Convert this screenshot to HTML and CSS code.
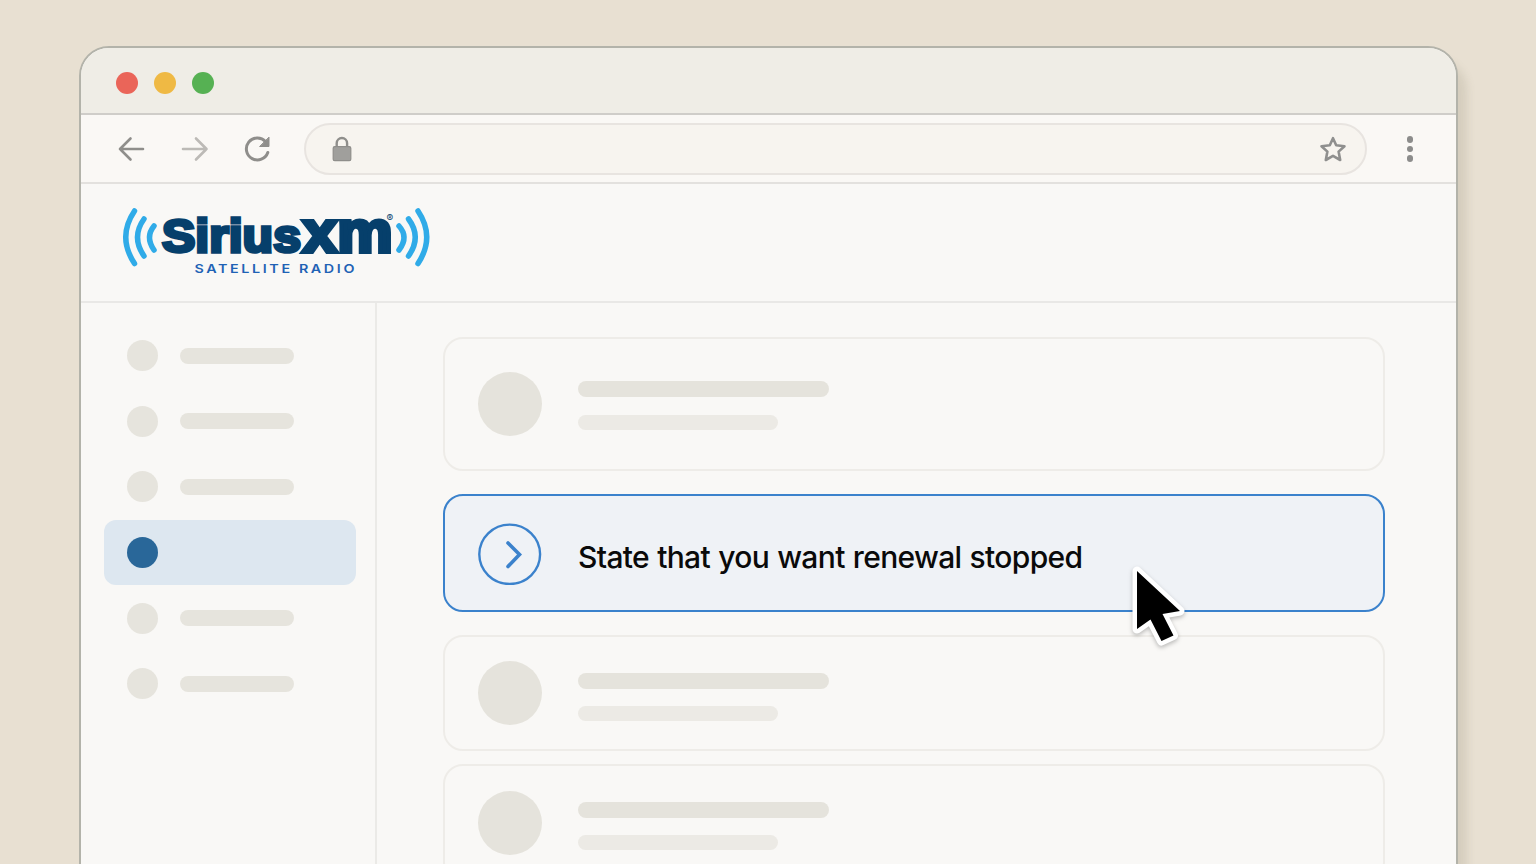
FILE: index.html
```html
<!DOCTYPE html>
<html lang="en">
<head>
  <meta charset="UTF-8">
  <meta name="viewport" content="width=device-width, initial-scale=1.0">
  <title>SiriusXM</title>
  <link rel="stylesheet" href="styles.css">
</head>
<body>

  <div class="browser">
    <!-- Window buttons -->
    <div class="title-bar">
      <span class="dot red"></span>
      <span class="dot yellow"></span>
      <span class="dot green"></span>
    </div>

    <!-- Toolbar -->
    <div class="toolbar">
      <svg class="nav-icon" width="30" height="30" viewBox="0 0 30 30">
        <path d="M27 15H4M14.500 4.500L4 15L14.500 25.500" />
      </svg>
      <svg class="nav-icon forward" width="30" height="30" viewBox="0 0 30 30">
        <path d="M3 15h23.500M16 4.500L26.500 15L16 25.500" />
      </svg>
      <svg class="nav-icon reload" width="30" height="30" viewBox="0 0 30 30">
        <path d="M24.800 18.500A11 11 0 1 1 22.500 7.500" />
        <path class="reload-head" d="M26 3.500V12.500H17Z" />
      </svg>
      <div class="address-bar">
        <svg width="22" height="28" viewBox="0 0 22 28">
          <path class="lock-arch" d="M5.700 12V8.200a5.200 5.200 0 0 1 10.400 0V12" />
          <rect class="lock-body" x="2.200" y="11.700" width="17.600" height="14" rx="1.500" />
        </svg>
        <svg class="star" width="30" height="30" viewBox="0 0 30 30">
          <path d="M15 4.200L18.200 11.200L26.500 12.200L20.600 17.600L22.200 26L15 21.900L7.800 26L9.400 17.600L3.500 12.200L11.800 11.200Z" />
        </svg>
      </div>
      <div class="menu-dots">
        <span></span>
        <span></span>
        <span></span>
      </div>
    </div>

    <!-- Logo -->
    <div class="site-header">
      <svg class="logo" width="310" height="76" viewBox="0 0 310 76">
        <g class="wave">
          <path d="M11.500 8Q-6 34 11.500 60.500" />
          <path d="M21 16Q8 34 21 53" />
          <path d="M31 23Q22 34 31 47" />
          <path d="M276 23Q286 34 276 47" />
          <path d="M285.500 16Q299 34 285.500 53" />
          <path d="M295 8Q312.500 34 295 60.500" />
        </g>
        <text class="logo-sirius" x="39" y="49" textLength="139" lengthAdjust="spacingAndGlyphs">Sirius</text>
        <text class="logo-xm" x="179.500" y="49" textLength="90" lengthAdjust="spacingAndGlyphs">xm</text>
        <text class="logo-reg" x="263.500" y="19">®</text>
        <text class="logo-sub" x="71.500" y="70" textLength="162.500" lengthAdjust="spacingAndGlyphs">SATELLITE RADIO</text>
      </svg>
    </div>

    <div class="page">
      <!-- Sidebar -->
      <div class="sidebar">
        <div class="side-item"><span class="side-dot"></span><span class="side-line"></span></div>
        <div class="side-item"><span class="side-dot"></span><span class="side-line"></span></div>
        <div class="side-item"><span class="side-dot"></span><span class="side-line"></span></div>
        <div class="side-item active"><span class="side-dot"></span></div>
        <div class="side-item"><span class="side-dot"></span><span class="side-line"></span></div>
        <div class="side-item"><span class="side-dot"></span><span class="side-line"></span></div>
      </div>

      <!-- Cards -->
      <div class="content">
        <div class="card tall">
          <span class="avatar"></span>
          <div class="lines">
            <span class="line"></span>
            <span class="line short"></span>
          </div>
        </div>

        <div class="card selected">
          <svg class="arrow-circle" width="64" height="64" viewBox="0 0 64 64">
            <ellipse cx="31.700" cy="33.300" rx="30.400" ry="29.700" />
            <path class="chevron" d="M30 22L41.500 33.500L30 45.500" />
          </svg>
          <p class="card-text">State that you want renewal stopped</p>
          <svg class="cursor" width="66" height="90" viewBox="0 0 66 90">
            <path d="M12 11V69L25.500 59.500L36.500 81L48.500 75.500L37.500 54L55 51Z" />
          </svg>
        </div>

        <div class="card">
          <span class="avatar"></span>
          <div class="lines">
            <span class="line"></span>
            <span class="line short"></span>
          </div>
        </div>

        <div class="card last">
          <span class="avatar"></span>
          <div class="lines">
            <span class="line"></span>
            <span class="line short"></span>
          </div>
        </div>
      </div>
    </div>
  </div>

</body>
</html>
```
FILE: styles.css
```css
* {
  margin: 0;
  padding: 0;
  box-sizing: border-box;
}

body {
  background: #e8e0d2;
  font-family: 'Inter', 'Liberation Sans', sans-serif;
  height: 100vh;
  padding: 46px 78px 0 79px;
  overflow: hidden;
}

svg {
  flex-shrink: 0;
}

.browser {
  height: 860px;
  background: #f9f8f6;
  border: 2px solid #b3b3aa;
  border-radius: 30px 30px 0 0;
  box-shadow: 9px 14px 8px rgba(120, 110, 90, 0.16);
  display: flex;
  flex-direction: column;
}

/* Title bar */
.title-bar {
  height: 67px;
  background: #efede6;
  border-bottom: 2px solid #cfcdc9;
  border-radius: 28px 28px 0 0;
  display: flex;
  align-items: center;
  gap: 16px;
  padding: 4px 35px 0;
}

.dot {
  width: 22px;
  height: 22px;
  border-radius: 50%;
}

.red {
  background: #ea6559;
}

.yellow {
  background: #efb944;
}

.green {
  background: #56b153;
}

/* Toolbar */
.toolbar {
  height: 69px;
  background: #faf8f5;
  border-bottom: 2px solid #e3e1de;
  display: flex;
  align-items: center;
  padding: 1px 43px 0 35px;
}

.nav-icon {
  fill: none;
  stroke: #8f8e8b;
  stroke-width: 2.6;
  stroke-linecap: round;
  stroke-linejoin: round;
}

.forward {
  margin-left: 34px;
  stroke: #bcbab6;
}

.reload {
  margin-left: 33px;
  stroke-width: 3;
}

.reload-head {
  fill: #8f8e8b;
  stroke-width: 1;
}

.address-bar {
  flex: 1;
  height: 52px;
  margin-left: 31px;
  background: #f7f4ef;
  border: 2px solid #e8e4e0;
  border-radius: 26px;
  display: flex;
  align-items: center;
  justify-content: space-between;
  padding: 0 17px 0 25px;
}

.lock-arch {
  fill: none;
  stroke: #8f8e8b;
  stroke-width: 2.4;
}

.lock-body {
  fill: #a09f9c;
  stroke: #8f8e8b;
  stroke-width: 1.2;
}

.star {
  fill: none;
  stroke: #8f8f8e;
  stroke-width: 2.6;
  stroke-linejoin: round;
}

.menu-dots {
  margin-left: 40px;
  display: flex;
  flex-direction: column;
  gap: 3px;
}

.menu-dots span {
  width: 6.5px;
  height: 6.5px;
  border-radius: 50%;
  background: #8c8c8b;
}

/* Header */
.site-header {
  height: 119px;
  border-bottom: 2px solid #e9e8e6;
  padding: 19px 42px;
}

.logo {
  display: block;
  overflow: visible;
}

.wave {
  fill: none;
  stroke: #30abe8;
  stroke-width: 5.5;
  stroke-linecap: round;
}

.logo-sirius,
.logo-xm {
  fill: #063f6b;
  stroke: #063f6b;
  font-family: 'Liberation Sans', Arial, sans-serif;
  font-weight: 700;
}

.logo-sirius {
  font-size: 46px;
  stroke-width: 3.4;
}

.logo-xm {
  font-size: 59px;
  stroke-width: 4.2;
}

.logo-reg {
  fill: #063f6b;
  font-size: 10px;
}

.logo-sub {
  fill: #1f62b5;
  font-size: 12px;
  font-weight: 600;
  letter-spacing: 2.2px;
}

/* Page */
.page {
  flex: 1;
  display: flex;
}

.sidebar {
  width: 296px;
  border-right: 2px solid #ebeae7;
  padding: 20px 19px 0 23px;
}

.side-item {
  height: 65.6px;
  display: flex;
  align-items: center;
  gap: 22px;
  padding-left: 23px;
}

.side-dot {
  width: 31px;
  height: 31px;
  border-radius: 50%;
  background: #e6e4dd;
}

.side-line {
  width: 114px;
  height: 16px;
  border-radius: 8px;
  background: #e6e4dd;
}

.active {
  background: #dde7f0;
  border-radius: 12px;
}

.active .side-dot {
  background: #296799;
}

/* Cards */
.content {
  flex: 1;
  padding: 34px 71px 0 66px;
}

.card {
  height: 116px;
  border: 2px solid #eeece8;
  border-radius: 20px;
  display: flex;
  align-items: center;
  gap: 36px;
  padding-left: 33px;
  margin-bottom: 13px;
}

.tall {
  height: 134px;
  margin-bottom: 23px;
}

.last {
  height: 118px;
}

.avatar {
  width: 64px;
  height: 64px;
  border-radius: 50%;
  background: #e5e3dc;
}

.lines {
  display: flex;
  flex-direction: column;
  gap: 17px;
  padding-top: 8px;
}

.tall .lines {
  gap: 18px;
  padding-top: 3px;
}

.last .lines {
  padding-top: 6px;
}

.line {
  width: 251px;
  height: 15.5px;
  border-radius: 8px;
  background: #e5e3dc;
}

.short {
  width: 200px;
  height: 15px;
  background: #eceae5;
}

.selected {
  position: relative;
  height: 118px;
  background: #eff2f6;
  border-color: #3b82cc;
  margin-bottom: 23px;
}

.arrow-circle {
  fill: none;
  stroke: #3b82cc;
  stroke-width: 2.4;
}

.chevron {
  stroke-width: 3.6;
  stroke-linecap: round;
}

.card-text {
  color: #0a0a0a;
  font-size: 30px;
  font-weight: 500;
  letter-spacing: -0.66px;
  word-spacing: 0.8px;
  line-height: 36px;
  padding-top: 8px;
}

/* Pointer over the selected card */
.cursor {
  position: absolute;
  left: 680px;
  top: 64px;
  fill: #000;
  stroke: #fff;
  stroke-width: 9;
  stroke-linejoin: round;
  paint-order: stroke;
  filter: drop-shadow(0 2px 2px rgba(0, 0, 0, 0.25));
}
```
